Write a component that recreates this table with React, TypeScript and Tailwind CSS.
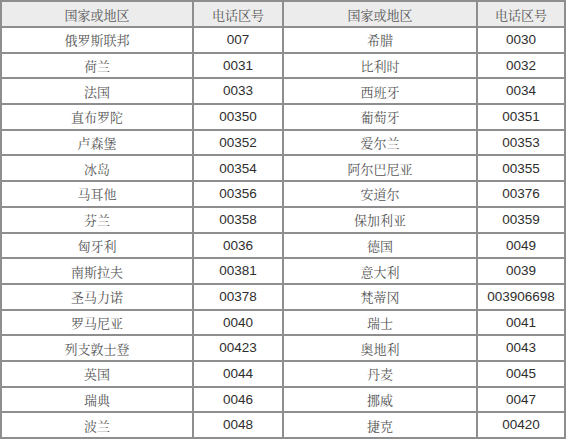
const rows: [string, string, string, string][] = [
  ["俄罗斯联邦", "007", "希腊", "0030"],
  ["荷兰", "0031", "比利时", "0032"],
  ["法国", "0033", "西班牙", "0034"],
  ["直布罗陀", "00350", "葡萄牙", "00351"],
  ["卢森堡", "00352", "爱尔兰", "00353"],
  ["冰岛", "00354", "阿尔巴尼亚", "00355"],
  ["马耳他", "00356", "安道尔", "00376"],
  ["芬兰", "00358", "保加利亚", "00359"],
  ["匈牙利", "0036", "德国", "0049"],
  ["南斯拉夫", "00381", "意大利", "0039"],
  ["圣马力诺", "00378", "梵蒂冈", "003906698"],
  ["罗马尼亚", "0040", "瑞士", "0041"],
  ["列支敦士登", "00423", "奥地利", "0043"],
  ["英国", "0044", "丹麦", "0045"],
  ["瑞典", "0046", "挪威", "0047"],
  ["波兰", "0048", "捷克", "00420"],
];

const cn = "font-['Noto_Serif_CJK_SC','Noto_Sans_CJK_SC',serif] text-[13px] text-[#555]";
const num = "font-['Liberation_Sans',Arial,sans-serif] text-[13.5px] text-[#2e2e2e]";
const cell = "border-2 border-[#8e8e8e] text-center align-middle p-0 leading-none";

export default function App() {
  return (
    <div className="w-[567px] h-[441px] bg-white overflow-hidden">
      <table className="table-fixed border-collapse w-[566px]">
        <colgroup>
          <col className="w-[192px]" />
          <col className="w-[90px]" />
          <col className="w-[194px]" />
          <col className="w-[88px]" />
        </colgroup>
        <thead>
          <tr className="h-[26px] bg-[#ececec]">
            <th className={`${cell} ${cn} font-normal`}>国家或地区</th>
            <th className={`${cell} ${cn} font-normal`}>电话区号</th>
            <th className={`${cell} ${cn} font-normal`}>国家或地区</th>
            <th className={`${cell} ${cn} font-normal`}>电话区号</th>
          </tr>
        </thead>
        <tbody>
          {rows.map((r, i) => (
            <tr key={i} className="h-[25.7px]">
              <td className={`${cell} ${cn}`}>{r[0]}</td>
              <td className={`${cell} ${num}`}>{r[1]}</td>
              <td className={`${cell} ${cn}`}>{r[2]}</td>
              <td className={`${cell} ${num}`}>{r[3]}</td>
            </tr>
          ))}
        </tbody>
      </table>
    </div>
  );
}
